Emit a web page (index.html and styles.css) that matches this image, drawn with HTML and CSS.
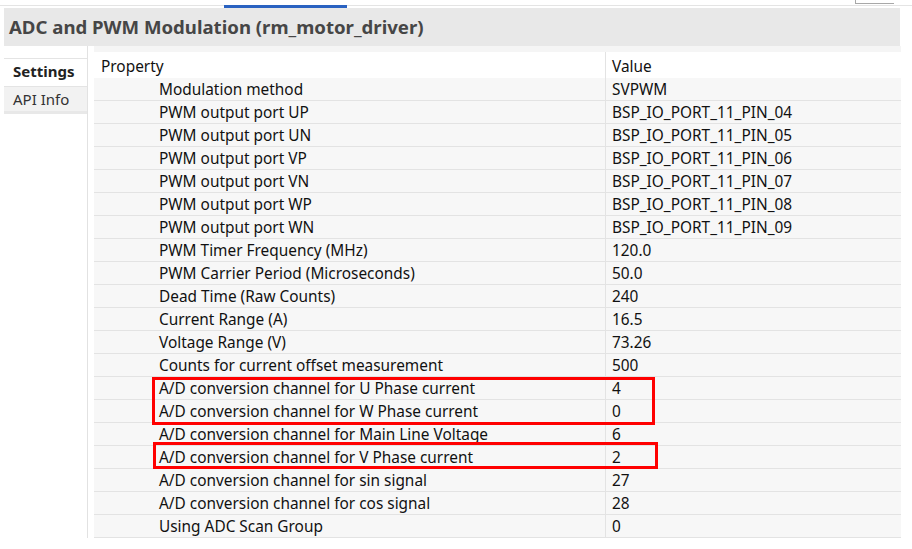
FILE: index.html
```html
<!DOCTYPE html>
<html lang="en">

<head>
    <meta charset="UTF-8">
    <meta name="viewport" content="width=device-width, initial-scale=1.0">
    <title>ADC and PWM Modulation</title>
    <link rel="stylesheet" href="styles.css">
</head>

<body>
    <!-- 上方分頁條 -->
    <div class="topbar">
        <div class="top_tab"></div>
        <div class="top_box"></div>
    </div>

    <!-- 標題 -->
    <div class="tittle">
        <h1>ADC and PWM Modulation (rm_motor_driver)</h1>
    </div>

    <div class="main">
        <!-- 左側分頁 -->
        <div class="side">
            <div class="tab active">Settings</div>
            <div class="tab">API Info</div>
        </div>

        <!-- 屬性表格 -->
        <div class="table_wrap">
            <div class="row head">
                <div class="prop">Property</div>
                <div class="val">Value</div>
            </div>
            <div class="row"><div class="prop sub">Modulation method</div><div class="val">SVPWM</div></div>
            <div class="row"><div class="prop sub">PWM output port UP</div><div class="val">BSP_IO_PORT_11_PIN_04</div></div>
            <div class="row"><div class="prop sub">PWM output port UN</div><div class="val">BSP_IO_PORT_11_PIN_05</div></div>
            <div class="row"><div class="prop sub">PWM output port VP</div><div class="val">BSP_IO_PORT_11_PIN_06</div></div>
            <div class="row"><div class="prop sub">PWM output port VN</div><div class="val">BSP_IO_PORT_11_PIN_07</div></div>
            <div class="row"><div class="prop sub">PWM output port WP</div><div class="val">BSP_IO_PORT_11_PIN_08</div></div>
            <div class="row"><div class="prop sub">PWM output port WN</div><div class="val">BSP_IO_PORT_11_PIN_09</div></div>
            <div class="row"><div class="prop sub">PWM Timer Frequency (MHz)</div><div class="val">120.0</div></div>
            <div class="row"><div class="prop sub">PWM Carrier Period (Microseconds)</div><div class="val">50.0</div></div>
            <div class="row"><div class="prop sub">Dead Time (Raw Counts)</div><div class="val">240</div></div>
            <div class="row"><div class="prop sub">Current Range (A)</div><div class="val">16.5</div></div>
            <div class="row"><div class="prop sub">Voltage Range (V)</div><div class="val">73.26</div></div>
            <div class="row"><div class="prop sub">Counts for current offset measurement</div><div class="val">500</div></div>
            <div class="row"><div class="prop sub">A/D conversion channel for U Phase current</div><div class="val">4</div></div>
            <div class="row"><div class="prop sub">A/D conversion channel for W Phase current</div><div class="val">0</div></div>
            <div class="row"><div class="prop sub">A/D conversion channel for Main Line Voltage</div><div class="val">6</div></div>
            <div class="row"><div class="prop sub">A/D conversion channel for V Phase current</div><div class="val">2</div></div>
            <div class="row"><div class="prop sub">A/D conversion channel for sin signal</div><div class="val">27</div></div>
            <div class="row"><div class="prop sub">A/D conversion channel for cos signal</div><div class="val">28</div></div>
            <div class="row"><div class="prop sub">Using ADC Scan Group</div><div class="val">0</div></div>

            <!-- 紅框標記 -->
            <div class="mark mark_uw"></div>
            <div class="mark mark_v"></div>
        </div>
    </div>
</body>

</html>
```

FILE: styles.css
```css
* {
    padding: 0px;
    margin: 0px;
    box-sizing: border-box;
}

body {
    width: 912px;
    height: 549px;
    overflow: hidden;
    background-color: white;
    font-family: "Noto Sans", "Noto Sans CJK SC", sans-serif;
    font-size: 15.4px;
    color: #111;
}

.topbar {
    position: relative;
    height: 8px;
    border-bottom: 2px solid white;
}

.topbar::before {
    content: "";
    position: absolute;
    left: 0;
    right: 0;
    top: 5px;
    height: 1px;
    background-color: #e4e4e4;
}

.top_tab {
    position: absolute;
    left: 224px;
    top: 5px;
    width: 123px;
    height: 3px;
    background-color: #2a62c1;
}

.top_box {
    position: absolute;
    left: 855px;
    top: -2px;
    width: 39px;
    height: 6px;
    border-left: 1px solid #a8a8a8;
    border-bottom: 1px solid #a8a8a8;
}

.tittle {
    margin-left: 4px;
    width: 896px;
    height: 38px;
    background-color: #e8e8e8;
    display: flex;
    align-items: center;
    padding-left: 5px;
}

.tittle h1 {
    font-size: 18.6px;
    font-weight: bold;
    color: #464646;
    padding-bottom: 2px;
}

.main {
    display: flex;
    height: 492px;
}

.side {
    margin-left: 4px;
    width: 84px;
    border-right: 1px solid #e2e2e2;
    padding-top: 12px;
    font-size: 15px;
}

.tab {
    height: 28px;
    line-height: 24px;
    padding-left: 9px;
    border-top: 1px solid #e4e4e4;
    background-color: #f2f2f2;
    color: #333;
}

.tab.active {
    background-color: white;
    font-weight: bold;
    color: #222;
}

.tab:last-child {
    border-bottom: 3px solid #e8e8e8;
}

.table_wrap {
    position: relative;
    margin-left: 6px;
    width: 807px;
    padding-top: 6px;
    background: linear-gradient(#f5f5f5, #f5f5f5) no-repeat top / 100% 6px;
}

.row {
    display: flex;
    height: 23px;
    background-color: #f7f7f7;
    border-bottom: 1px solid #e3e3e3;
}

.row.head {
    height: 26px;
    background-color: white;
    border-bottom: none;
}

.prop {
    width: 512px;
    flex-shrink: 0;
    padding-left: 7px;
    line-height: 24px;
    text-align: left;
    border-right: 1px solid #e3e3e3;
    white-space: nowrap;
}

.row.head .prop,
.row.head .val {
    line-height: 29px;
}

.prop.sub {
    padding-left: 65px;
}

.val {
    flex: 1;
    padding-left: 6px;
    line-height: 24px;
    white-space: nowrap;
    overflow: hidden;
}

.mark {
    position: absolute;
    border: 3px solid #ff0000;
}

.mark_uw {
    left: 58px;
    top: 331px;
    width: 503px;
    height: 48px;
}

.mark_v {
    left: 59px;
    top: 396px;
    width: 505px;
    height: 27px;
}
```
